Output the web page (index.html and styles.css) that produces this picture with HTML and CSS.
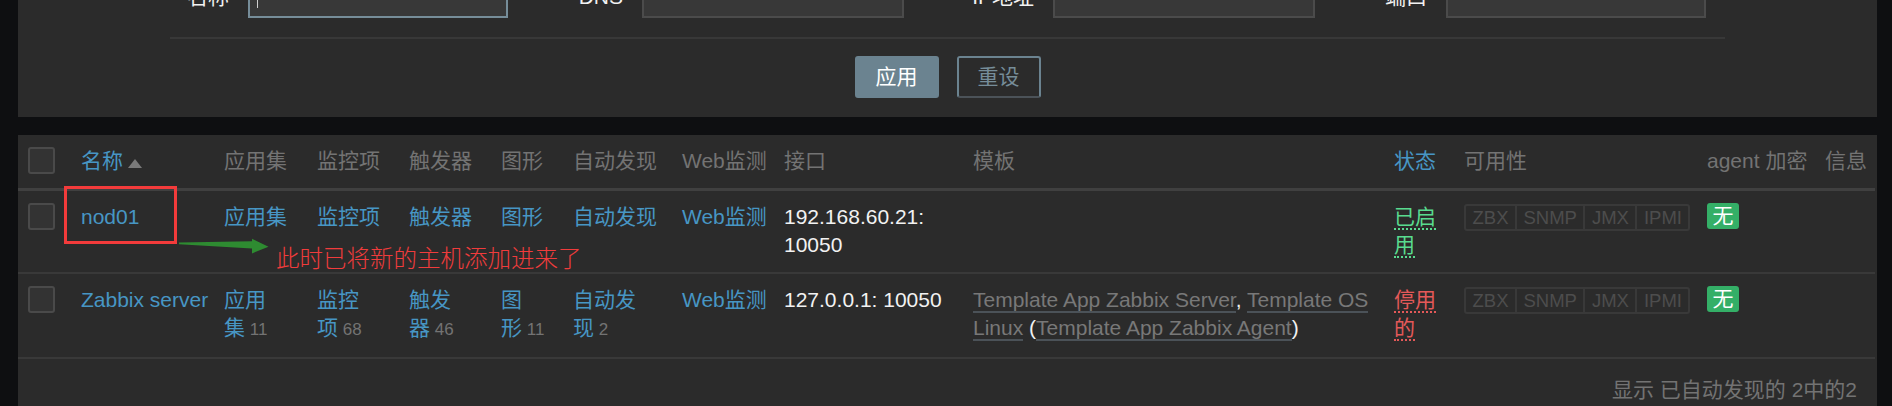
FILE: index.html
```html
<!DOCTYPE html>
<html lang="zh-CN">
<head>
<meta charset="utf-8">
<title>主机</title>
<link rel="stylesheet" href="styles.css">
</head>
<body>
<div class="page">
  <section class="filter">
    <div class="fields">
      <label class="flabel">名称</label>
      <div class="finput focus"><span class="caret"></span></div>
      <label class="flabel">DNS</label>
      <div class="finput"></div>
      <label class="flabel">IP地址</label>
      <div class="finput"></div>
      <label class="flabel">端口</label>
      <div class="finput"></div>
    </div>
    <div class="fsep"></div>
    <div class="fbuttons">
      <button class="btn">应用</button>
      <button class="btn alt">重设</button>
    </div>
  </section>

  <section class="list">
    <table>
      <colgroup>
        <col style="width:55px"><col style="width:143px"><col style="width:93px"><col style="width:92px">
        <col style="width:92px"><col style="width:72px"><col style="width:109px"><col style="width:102px">
        <col style="width:189px"><col style="width:421px"><col style="width:70px"><col style="width:243px">
        <col style="width:118px"><col style="width:58px">
      </colgroup>
      <thead>
        <tr>
          <th class="cbcol"><span class="cb"></span></th>
          <th><a class="sort">名称</a><span class="arrow-up"></span></th>
          <th>应用集</th>
          <th>监控项</th>
          <th>触发器</th>
          <th>图形</th>
          <th>自动发现</th>
          <th>Web监测</th>
          <th>接口</th>
          <th>模板</th>
          <th><a class="sort">状态</a></th>
          <th>可用性</th>
          <th>agent 加密</th>
          <th>信息</th>
        </tr>
      </thead>
      <tbody>
        <tr>
          <td class="cbcol"><span class="cb"></span></td>
          <td class="nowrap"><a class="lnk">nod01</a></td>
          <td><a class="lnk">应用集</a></td>
          <td><a class="lnk">监控项</a></td>
          <td><a class="lnk">触发器</a></td>
          <td><a class="lnk">图形</a></td>
          <td><a class="lnk">自动发现</a></td>
          <td><a class="lnk">Web监测</a></td>
          <td>192.168.60.21: 10050</td>
          <td></td>
          <td><a class="st on">已启用</a></td>
          <td><span class="avail"><span>ZBX</span><span>SNMP</span><span>JMX</span><span>IPMI</span></span></td>
          <td><span class="badge">无</span></td>
          <td></td>
        </tr>
        <tr>
          <td class="cbcol"><span class="cb"></span></td>
          <td class="nowrap"><a class="lnk">Zabbix server</a></td>
          <td><a class="lnk">应用集</a><span class="cnt">&nbsp;11</span></td>
          <td><a class="lnk">监控项</a><span class="cnt">&nbsp;68</span></td>
          <td><a class="lnk">触发器</a><span class="cnt">&nbsp;46</span></td>
          <td><a class="lnk">图形</a><span class="cnt">&nbsp;11</span></td>
          <td><a class="lnk">自动发现</a><span class="cnt">&nbsp;2</span></td>
          <td><a class="lnk">Web监测</a></td>
          <td>127.0.0.1: 10050</td>
          <td><a class="alt">Template App Zabbix Server</a>, <a class="alt">Template OS Linux</a> (<a class="alt">Template App Zabbix Agent</a>)</td>
          <td><a class="st off">停用的</a></td>
          <td><span class="avail"><span>ZBX</span><span>SNMP</span><span>JMX</span><span>IPMI</span></span></td>
          <td><span class="badge">无</span></td>
          <td></td>
        </tr>
      </tbody>
    </table>
    <div class="paging">显示 已自动发现的 2中的2</div>

    <div class="mark-box"></div>
    <svg class="mark-arrow" viewBox="0 0 90 17" width="90" height="17">
      <polygon points="0,4.5 73,3.2 73,0.8 89.5,8.7 73,15.4 73,10.6 0,6.2" fill="#2e8b31"/>
    </svg>
    <div class="mark-text">此时已将新的主机添加进来了</div>
  </section>
</div>
</body>
</html>
```

FILE: styles.css
```css
html, body {
  margin: 0;
  padding: 0;
  height: 100%;
  overflow: hidden;
}

body {
  background: #0e0f11;
  font-family: "Liberation Sans", "Noto Sans CJK SC", sans-serif;
  font-size: 21px;
  line-height: 28.5px;
  color: #f2f2f2;
}

.page {
  padding: 0 15px 0 18px;
}

/* ---------- filter ---------- */
.filter {
  background: #2b2b2b;
  padding-bottom: 19px;
}

.fields {
  display: grid;
  grid-template-columns: 230px 260px 134px 262px 149px 262px 131px 260px;
  height: 42px;
  margin-top: -24px;
  align-items: center;
}

.flabel {
  text-align: right;
  padding-right: 19px;
  color: #f2f2f2;
}

.finput {
  height: 42px;
  box-sizing: border-box;
  background: #383838;
  border: 2px solid #4b4b4b;
  display: flex;
  align-items: center;
}

.finput.focus {
  border-color: #768d99;
}

.caret {
  width: 1px;
  height: 22px;
  background: #cfcfcf;
  margin-left: 7px;
}

.fsep {
  height: 2px;
  background: #383838;
  margin: 19px 152px 0;
}

.fbuttons {
  display: flex;
  justify-content: center;
  gap: 18px;
  margin-top: 17px;
}

.btn {
  font: inherit;
  height: 42px;
  padding: 0 19px;
  border: 2px solid #6b8390;
  border-radius: 3px;
  background: #6b8390;
  color: #ffffff;
  line-height: 38px;
}

.btn.alt {
  background: transparent;
  color: #768d99;
}

/* ---------- list ---------- */
.list {
  position: relative;
  background: #2b2b2b;
  margin-top: 18px;
  padding-bottom: 30px;
}

table {
  table-layout: fixed;
  width: 1857px;
  border-collapse: separate;
  border-spacing: 0;
}

th, td {
  padding: 12px 7px 12px 8px;
  text-align: left;
  vertical-align: top;
  font-weight: normal;
}

th {
  color: #737373;
  white-space: nowrap;
  border-bottom: 3px solid #404040;
}

td {
  border-bottom: 2px solid #393939;
}

th.cbcol, td.cbcol {
  padding-left: 10px;
}

.nowrap {
  white-space: nowrap;
}

.cb {
  display: block;
  width: 27px;
  height: 27px;
  box-sizing: border-box;
  border: 2px solid #4a4a4a;
  border-radius: 3px;
  background: #333333;
}

.sort,
.lnk {
  color: #4796c4;
}

.arrow-up {
  display: inline-block;
  width: 0;
  height: 0;
  margin-left: 5px;
  border-left: 7px solid transparent;
  border-right: 7px solid transparent;
  border-bottom: 9px solid #7a7a7a;
}

.cnt {
  color: #737373;
  font-size: 17px;
}

.alt {
  color: #787878;
  border-bottom: 2px solid #4b5258;
}

.st {
  border-bottom: 2px dotted;
}

.st.on {
  color: #59db8f;
}

.st.off {
  color: #e45959;
}

.avail {
  display: inline-flex;
  vertical-align: top;
  margin-top: 1px;
  border: 2px solid #393939;
  border-radius: 3px;
  font-size: 18.5px;
  line-height: 23px;
  color: #4d4d4d;
  white-space: nowrap;
}

.avail span {
  padding: 0 6.5px;
}

.avail span + span {
  border-left: 2px solid #393939;
}

.badge {
  display: inline-block;
  vertical-align: top;
  background: #34af67;
  color: #ffffff;
  border-radius: 3px;
  padding: 0 5.5px;
  line-height: 26px;
}

.paging {
  text-align: right;
  color: #737373;
  padding: 17px 20px 0 0;
}

/* ---------- annotation overlay ---------- */
.mark-box {
  position: absolute;
  left: 46px;
  top: 51px;
  width: 113px;
  height: 58px;
  box-sizing: border-box;
  border: 3px solid #f33b3b;
}

.mark-arrow {
  position: absolute;
  left: 161px;
  top: 103px;
}

.mark-text {
  position: absolute;
  left: 258px;
  top: 110px;
  font-family: "Noto Sans CJK SC", sans-serif;
  font-weight: 300;
  font-size: 23.5px;
  line-height: 24px;
  color: #f03c3c;
  white-space: nowrap;
}
```
